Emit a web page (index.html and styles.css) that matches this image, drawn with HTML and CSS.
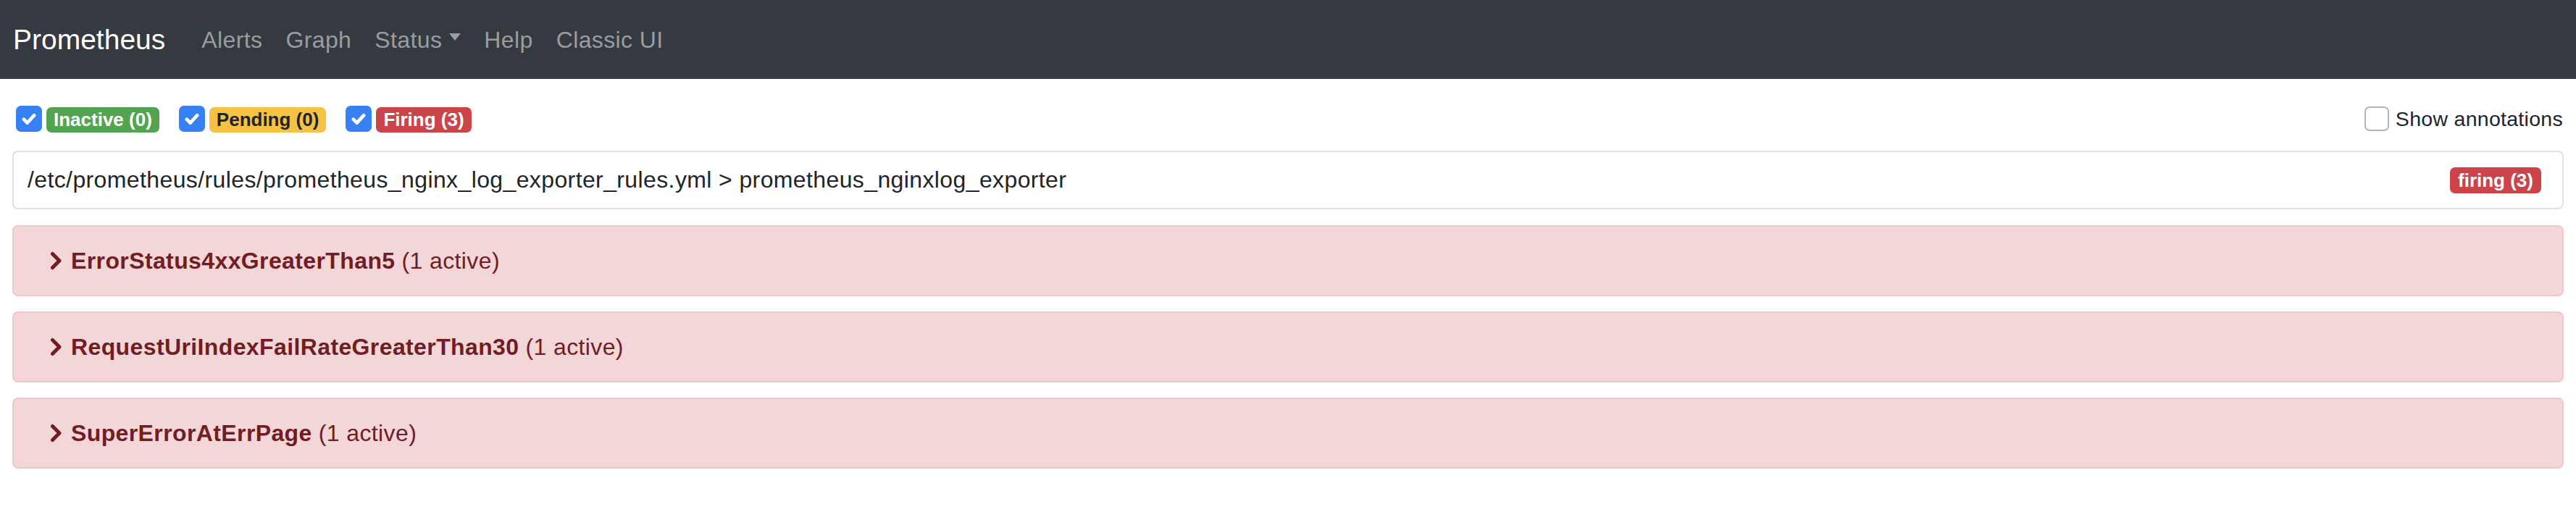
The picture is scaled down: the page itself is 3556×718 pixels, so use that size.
FILE: index.html
```html
<!DOCTYPE html>
<html lang="en">
<head>
<meta charset="utf-8">
<title>Prometheus Time Series Collection and Processing Server</title>
<link rel="stylesheet" href="styles.css">
</head>
<body>
<nav class="navbar">
  <a class="brand" href="#">Prometheus</a>
  <ul class="nav">
    <li><a class="nav-link" href="#">Alerts</a></li>
    <li><a class="nav-link" href="#">Graph</a></li>
    <li><a class="nav-link" href="#">Status<span class="caret"></span></a></li>
    <li><a class="nav-link" href="#">Help</a></li>
    <li><a class="nav-link" href="#">Classic UI</a></li>
  </ul>
</nav>
<main class="container">
  <div class="filters">
    <div class="status-filters">
      <label class="filter">
        <span class="check checked"><svg viewBox="0 0 16 16"><path d="M4.6 8.3l2.3 2.4 4.5-5" /></svg></span>
        <span class="badge badge-success">Inactive (0)</span>
      </label>
      <label class="filter">
        <span class="check checked"><svg viewBox="0 0 16 16"><path d="M4.6 8.3l2.3 2.4 4.5-5" /></svg></span>
        <span class="badge badge-warning">Pending (0)</span>
      </label>
      <label class="filter">
        <span class="check checked"><svg viewBox="0 0 16 16"><path d="M4.6 8.3l2.3 2.4 4.5-5" /></svg></span>
        <span class="badge badge-danger">Firing (3)</span>
      </label>
    </div>
    <label class="annotations">
      <span class="check unchecked"></span>
      <span class="annotations-label">Show annotations</span>
    </label>
  </div>

  <div class="group-header">
    <span class="group-name">/etc/prometheus/rules/prometheus_nginx_log_exporter_rules.yml &gt; prometheus_nginxlog_exporter</span>
    <span class="badge badge-danger">firing (3)</span>
  </div>

  <div class="alert-rule">
    <svg class="chevron" viewBox="0 0 17 26"><path d="M3.5 3.5l9.5 9.5-9.5 9.5" /></svg>
    <strong class="rule-name">ErrorStatus4xxGreaterThan5</strong><span class="rule-count">(1 active)</span>
  </div>
  <div class="alert-rule">
    <svg class="chevron" viewBox="0 0 17 26"><path d="M3.5 3.5l9.5 9.5-9.5 9.5" /></svg>
    <strong class="rule-name">RequestUriIndexFailRateGreaterThan30</strong><span class="rule-count">(1 active)</span>
  </div>
  <div class="alert-rule">
    <svg class="chevron" viewBox="0 0 17 26"><path d="M3.5 3.5l9.5 9.5-9.5 9.5" /></svg>
    <strong class="rule-name">SuperErrorAtErrPage</strong><span class="rule-count">(1 active)</span>
  </div>
</main>
</body>
</html>
```

FILE: styles.css
```css
* {
  box-sizing: border-box;
}

html, body {
  margin: 0;
  padding: 0;
  background: #ffffff;
}

body {
  font-family: "Liberation Sans", Arial, Helvetica, sans-serif;
  color: #212529;
  font-size: 32px;
  letter-spacing: 0.012em;
}

a {
  text-decoration: none;
}

/* ---------- navbar ---------- */
.navbar {
  height: 109px;
  background: #343a40;
  display: flex;
  align-items: center;
  padding-left: 18px;
}

.brand {
  color: #ffffff;
  font-size: 39px;
  letter-spacing: 0;
  margin-right: 34px;
  line-height: 1;
}

.nav {
  display: flex;
  list-style: none;
  margin: 0;
  padding: 0;
}

.nav-link {
  display: flex;
  align-items: center;
  color: #9a9da0;
  font-size: 32px;
  line-height: 48px;
  padding: 0 16px;
}

.caret {
  display: inline-block;
  margin-left: 10px;
  width: 0;
  height: 0;
  border-top: 10px solid #9a9da0;
  border-left: 8px solid transparent;
  border-right: 8px solid transparent;
  margin-top: -8px;
}

/* ---------- content ---------- */
.container {
  padding: 0 17px;
}

.filters {
  margin-top: 37px;
  height: 36px;
  display: flex;
  align-items: center;
  justify-content: space-between;
}

.status-filters {
  display: flex;
  align-items: center;
  padding-left: 5px;
  gap: 27px;
}

.filter {
  display: flex;
  align-items: center;
  gap: 6px;
}

.check {
  display: inline-flex;
  align-items: center;
  justify-content: center;
  border-radius: 7px;
}

.check.checked {
  width: 36px;
  height: 36px;
  background: #3581f5;
}

.check.checked svg {
  width: 34px;
  height: 34px;
  fill: none;
  stroke: #ffffff;
  stroke-width: 2.2;
  stroke-linecap: round;
  stroke-linejoin: round;
}

.check.unchecked {
  width: 34px;
  height: 34px;
  background: #ffffff;
  border: 2px solid #b1b5bb;
}

.badge {
  display: inline-block;
  height: 35px;
  line-height: 35px;
  padding: 0 10px;
  font-size: 26px;
  font-weight: 700;
  letter-spacing: 0;
  border-radius: 7px;
  white-space: nowrap;
  margin-top: 2px;
}

.badge-success {
  background: #53a451;
  color: #ffffff;
}

.badge-warning {
  background: #f6c243;
  color: #212529;
}

.badge-danger {
  background: #cb444a;
  color: #ffffff;
}

.annotations {
  display: flex;
  align-items: center;
  gap: 9px;
  padding-right: 1px;
}

.annotations-label {
  font-size: 28.5px;
  letter-spacing: 0.01em;
}

.group-header {
  margin-top: 26px;
  height: 81px;
  border: 2px solid #dfe2e5;
  border-radius: 8px;
  display: flex;
  align-items: center;
  justify-content: space-between;
  padding: 0 29px 0 19px;
}

.group-header .badge {
  height: 36px;
  line-height: 36px;
  margin-top: 0;
  padding: 0 11px;
}

.group-name {
  font-size: 32px;
}

.alert-rule {
  margin-top: 22px;
  height: 98px;
  background: #f3d6d8;
  border: 2px solid #efc6c9;
  border-radius: 8px;
  color: #721c24;
  display: flex;
  align-items: center;
  padding-left: 50px;
}

.alert-rule + .alert-rule {
  margin-top: 21px;
}

.chevron {
  width: 17px;
  height: 26px;
  fill: none;
  stroke: #721c24;
  stroke-width: 5;
  stroke-linecap: round;
  stroke-linejoin: round;
  margin-right: 12px;
}

.rule-name {
  font-weight: 700;
  margin-right: 9px;
}
```
